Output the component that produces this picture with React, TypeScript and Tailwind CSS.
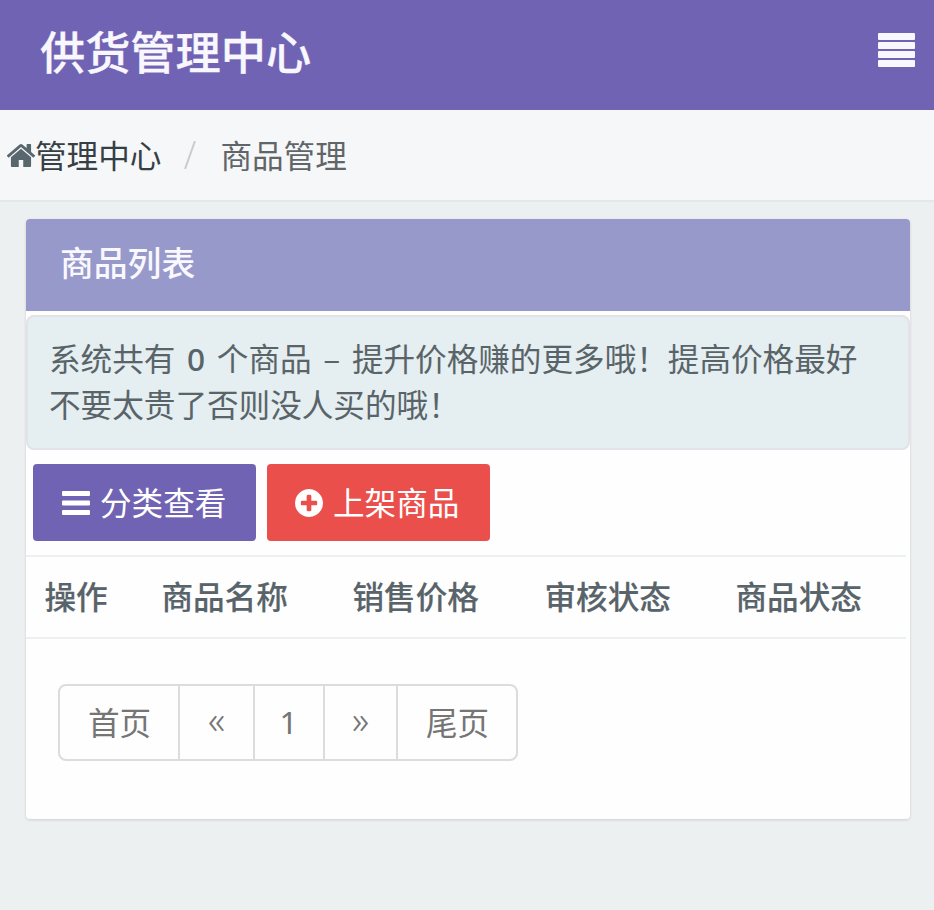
const columns = [
  { title: '操作', width: 'w-[117px]' },
  { title: '商品名称', width: 'w-[191px]' },
  { title: '销售价格', width: 'w-[192px]' },
  { title: '审核状态', width: 'w-[191px]' },
  { title: '商品状态', width: 'flex-1' },
]

const pages = [
  { label: '首页', width: 'w-[120px] pl-[1px]' },
  { label: '«', width: 'w-[75px] text-[38px] font-light pb-[6px]' },
  { label: '1', width: 'w-[70px] pr-[1px] pb-[2px]' },
  { label: '»', width: 'w-[73px] text-[38px] font-light pb-[6px]' },
  { label: '尾页', width: 'w-[118px] pl-[1px]' },
]

function HomeIcon() {
  return (
    <svg viewBox="96 253 1600 1283" className="w-[28px] h-[23px] shrink-0" preserveAspectRatio="none" fill="currentColor">
      <path d="M1472 992v480q0 26-19 45t-45 19h-384v-384h-256v384h-384q-26 0-45-19t-19-45v-480q0-1 .5-3t.5-3l575-474 575 474q1 2 1 6zm223-69l-62 74q-8 9-21 11h-3q-13 0-21-7l-692-577-692 577q-12 8-24 7-13-2-21-11l-62-74q-8-10-7-23.5t11-21.5l719-599q32-26 76-26t76 26l244 204v-195q0-14 9-23t23-9h192q14 0 23 9t9 23v408l219 182q10 8 11 21.5t-7 23.5z" />
    </svg>
  )
}

function PlusCircleIcon() {
  return (
    <svg viewBox="128 128 1536 1536" className="w-[28px] h-[28px] shrink-0" fill="currentColor">
      <path d="M1344 960v-128q0-26-19-45t-45-19h-256v-256q0-26-19-45t-45-19h-128q-26 0-45 19t-19 45v256h-256q-26 0-45 19t-19 45v128q0 26 19 45t45 19h256v256q0 26 19 45t45 19h128q26 0 45-19t19-45v-256h256q26 0 45-19t19-45zm320-64q0 209-103 385.5t-279.5 279.5-385.5 103-385.5-103-279.5-279.5-103-385.5 103-385.5 279.5-279.5 385.5-103 385.5 103 279.5 279.5 103 385.5z" />
    </svg>
  )
}

function BarsIcon() {
  return (
    <svg viewBox="0 0 28 24" className="w-[28px] h-[24px] shrink-0" fill="currentColor">
      <rect y="0" width="28" height="5" rx="1" />
      <rect y="9.5" width="28" height="5" rx="1" />
      <rect y="19" width="28" height="5" rx="1" />
    </svg>
  )
}

function MenuIcon() {
  return (
    <svg viewBox="0 0 37 34" className="w-[37px] h-[34px]" fill="currentColor">
      <rect y="0" width="37" height="7" rx="1" />
      <rect y="9" width="37" height="7" rx="1" />
      <rect y="18" width="37" height="7" rx="1" />
      <rect y="27" width="37" height="7" rx="1" />
    </svg>
  )
}

export default function App() {
  return (
    <div className="w-[934px] h-[910px] overflow-hidden bg-[#ecf0f1] font-['Noto_Sans_CJK_SC',sans-serif] text-[31.6px] text-[#58666e] whitespace-nowrap">
      <header className="h-[110px] bg-[#7163b4] flex items-start justify-between pl-[40px] pr-[19px] text-[#f8f7fd]">
        <h1 className="text-[45.2px] font-medium leading-[66px] pt-[18px] [-webkit-text-stroke:0.3px_#f8f7fd]">供货管理中心</h1>
        <button className="mt-[33px]">
          <MenuIcon />
        </button>
      </header>

      <nav className="h-[92px] bg-[#f6f7f9] border-b-2 border-[#e3e8e8] flex items-center pl-[7px] leading-[46px]">
        <HomeIcon />
        <a className="text-[#363f44] pb-[3px]">管理中心</a>
        <svg viewBox="0 0 12 28" className="w-[12px] h-[28px] ml-[23px] mr-[24px]" fill="none" stroke="#c9cccf" strokeWidth="2">
          <path d="M11 0L1 28" />
        </svg>
        <span className="text-[#5f6569] pb-[3px]">商品管理</span>
      </nav>

      <main className="pt-[17px] pl-[26px] pr-[24px]">
        <section className="h-[600px] bg-[#fefefe] rounded-[4px] shadow-[0_1px_3px_rgba(0,0,0,0.14)]">
          <h2 className="h-[92px] bg-[#9799ca] rounded-t-[4px] pl-[34px] text-[33.8px] leading-[86px] font-medium text-[#f8f8fe]">
            商品列表
          </h2>

          <div className="mt-[4px] h-[135px] bg-[#e5eef0] border-2 border-[#e2e2e8] rounded-[8px] pl-[21px] pt-[17px] leading-[46px] [word-spacing:4.6px] text-[#596469]">
            <p>
              系统共有 <b className="font-medium font-['Noto_Sans',sans-serif] leading-none">0</b> 个商品 – 提升价格赚的更多哦！提高价格最好
            </p>
            <p>不要太贵了否则没人买的哦！</p>
          </div>

          <div className="flex gap-[11px] pl-[7px] pt-[14px] text-white">
            <button className="w-[223px] h-[77px] rounded-[4px] bg-[#7163b4] flex items-center pl-[29px] gap-[10px]">
              <BarsIcon />
              <span className="pb-[2px]">分类查看</span>
            </button>
            <button className="w-[223px] h-[77px] rounded-[4px] bg-[#ea4f4c] flex items-center pl-[28px] gap-[10px]">
              <PlusCircleIcon />
              <span className="pb-[2px]">上架商品</span>
            </button>
          </div>

          <div className="mt-[14px] mr-[4px] h-[84px] border-y-2 border-[#edf0f2] flex pl-[18.5px] leading-[77px] font-medium text-[#58646a] [-webkit-text-stroke:0.15px_#58646a]">
            {columns.map((col) => (
              <div key={col.title} className={col.width}>
                {col.title}
              </div>
            ))}
          </div>

          <div className="ml-[32px] mt-[45px] w-[460px] h-[77px] flex border-2 border-[#dcdcdc] rounded-[8px] divide-x-2 divide-[#dcdcdc] text-[#757575] font-['Noto_Sans','Noto_Sans_CJK_SC',sans-serif]">
            {pages.map((page) => (
              <a key={page.label} className={`${page.width} flex items-center justify-center`}>
                {page.label}
              </a>
            ))}
          </div>
        </section>
      </main>
    </div>
  )
}
